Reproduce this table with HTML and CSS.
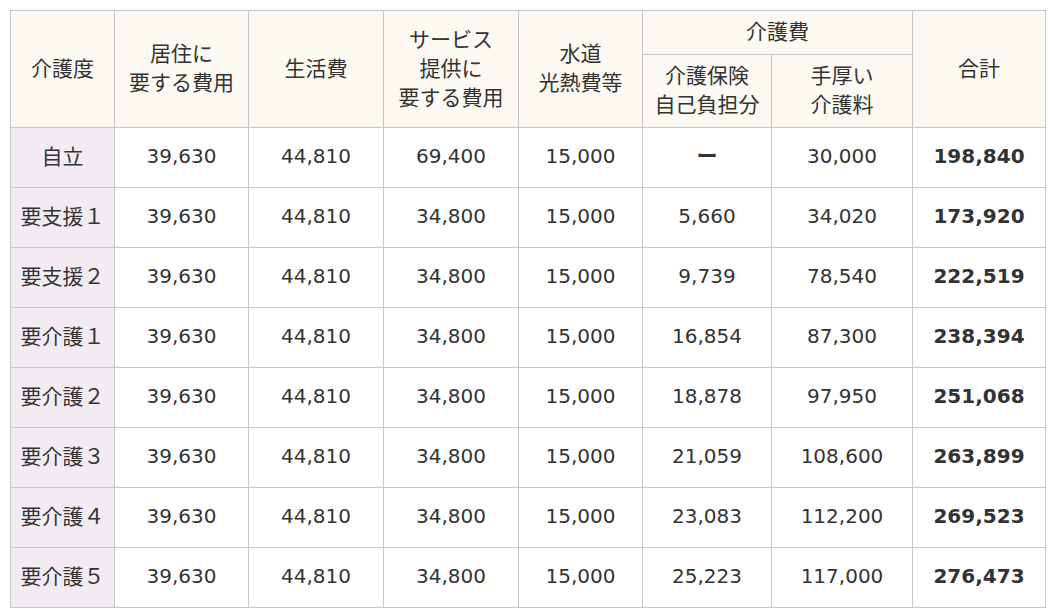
FILE: index.html
```html
<!DOCTYPE html>
<html lang="ja">
<head>
<meta charset="utf-8">
<title>費用表</title>
<link rel="stylesheet" href="styles.css">
</head>
<body>
<table class="cost-table">
  <colgroup>
    <col class="c1"><col class="c2"><col class="c3"><col class="c4"><col class="c5"><col class="c6"><col class="c7"><col class="c8">
  </colgroup>
  <thead>
    <tr class="h-top">
      <th rowspan="2">介護度</th>
      <th rowspan="2">居住に<br>要する費用</th>
      <th rowspan="2">生活費</th>
      <th rowspan="2">サービス<br>提供に<br>要する費用</th>
      <th rowspan="2">水道<br>光熱費等</th>
      <th colspan="2">介護費</th>
      <th rowspan="2">合計</th>
    </tr>
    <tr class="h-sub">
      <th>介護保険<br>自己負担分</th>
      <th>手厚い<br>介護料</th>
    </tr>
  </thead>
  <tbody>
    <tr><th class="lvl">自立</th><td>39,630</td><td>44,810</td><td>69,400</td><td>15,000</td><td class="ja">ー</td><td>30,000</td><td class="sum">198,840</td></tr>
    <tr><th class="lvl">要支援１</th><td>39,630</td><td>44,810</td><td>34,800</td><td>15,000</td><td>5,660</td><td>34,020</td><td class="sum">173,920</td></tr>
    <tr><th class="lvl">要支援２</th><td>39,630</td><td>44,810</td><td>34,800</td><td>15,000</td><td>9,739</td><td>78,540</td><td class="sum">222,519</td></tr>
    <tr><th class="lvl">要介護１</th><td>39,630</td><td>44,810</td><td>34,800</td><td>15,000</td><td>16,854</td><td>87,300</td><td class="sum">238,394</td></tr>
    <tr><th class="lvl">要介護２</th><td>39,630</td><td>44,810</td><td>34,800</td><td>15,000</td><td>18,878</td><td>97,950</td><td class="sum">251,068</td></tr>
    <tr><th class="lvl">要介護３</th><td>39,630</td><td>44,810</td><td>34,800</td><td>15,000</td><td>21,059</td><td>108,600</td><td class="sum">263,899</td></tr>
    <tr><th class="lvl">要介護４</th><td>39,630</td><td>44,810</td><td>34,800</td><td>15,000</td><td>23,083</td><td>112,200</td><td class="sum">269,523</td></tr>
    <tr><th class="lvl">要介護５</th><td>39,630</td><td>44,810</td><td>34,800</td><td>15,000</td><td>25,223</td><td>117,000</td><td class="sum">276,473</td></tr>
  </tbody>
</table>
</body>
</html>
```

FILE: styles.css
```css
html, body {
  margin: 0;
  padding: 0;
  background: #ffffff;
}

body {
  padding: 10px;
  font-family: "DejaVu Sans", "Noto Sans CJK JP", sans-serif;
  color: #333333;
}

.cost-table {
  border-collapse: collapse;
  table-layout: fixed;
  width: 1035px;
  font-size: 20px;
  line-height: 29px;
}

.c1 { width: 104px; }
.c2 { width: 134px; }
.c3 { width: 135px; }
.c4 { width: 135px; }
.c5 { width: 124px; }
.c6 { width: 129px; }
.c7 { width: 141px; }
.c8 { width: 133px; }

.cost-table th,
.cost-table td {
  border: 1px solid #c6c6c6;
  text-align: center;
  vertical-align: middle;
  padding: 0;
  font-weight: normal;
}

.cost-table thead th {
  background: #fcf8f2;
  font-size: 21px;
}

.h-top {
  height: 44px;
}

.h-sub {
  height: 73px;
}

.cost-table tbody tr {
  height: 60px;
}

.cost-table td {
  padding-bottom: 2px;
}

.cost-table .lvl {
  background: #f2ecf2;
  font-size: 21px;
}

.cost-table .ja {
  font-size: 21px;
  font-weight: bold;
}

.cost-table .sum {
  font-weight: bold;
}
```
